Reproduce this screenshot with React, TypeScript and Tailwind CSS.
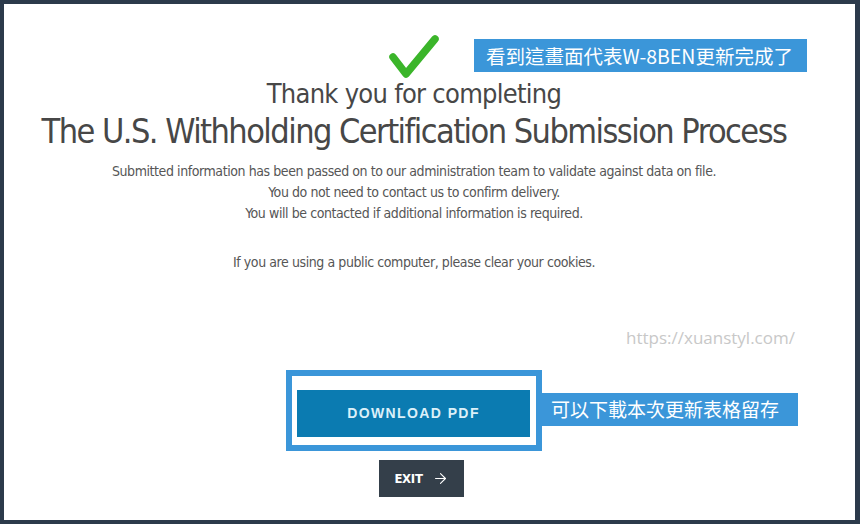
import React from "react";
import { ArrowRight } from "lucide-react";

const narrow = "font-['DejaVu_Sans_Condensed','Roboto',sans-serif]";

export default function App() {
  return (
    <div className="w-[860px] h-[524px] bg-[#2c3a4b] pt-[4px] pl-[4px] pr-[5px] pb-[4px]">
      <div className="relative w-full h-full bg-white flex flex-col items-center pr-[31px] overflow-hidden">
        <svg width="56" height="50" viewBox="0 0 56 50" className="mt-[24px] shrink-0">
          <path d="M7 29 L20 46 L49 11" fill="none" stroke="#3bb52a" strokeWidth="7.5" strokeLinecap="round" strokeLinejoin="round" />
        </svg>
        <div className={`${narrow} text-[27px] leading-[32px] tracking-[-0.72px] text-[#474747] whitespace-nowrap`}>Thank you for completing</div>
        <div className={`${narrow} text-[34px] leading-[40px] tracking-[-1.55px] mt-[1px] text-[#474747] whitespace-nowrap`}>
          The U.S. Withholding Certification Submission Process
        </div>
        <div className={`${narrow} text-[14px] leading-[21px] tracking-[-0.42px] mt-[10px] text-[#565656] text-center whitespace-nowrap`}>
          <p>Submitted information has been passed on to our administration team to validate against data on file.</p>
          <p>You do not need to contact us to confirm delivery.</p>
          <p>You will be contacted if additional information is required.</p>
          <p className="mt-[28px]">If you are using a public computer, please clear your cookies.</p>
        </div>

        <div className="relative mt-[97px] border-[6px] border-[#3b96d9] pt-[14px] pb-[8px] pl-[5px] pr-[6px]">
          <div className="w-[233px] h-[47px] bg-[#0b7bb1] flex items-center justify-center font-['Liberation_Sans',sans-serif] font-bold text-[14px] tracking-[1.4px] text-[#dcf0f9]">
            DOWNLOAD PDF
          </div>
          <div className="absolute left-[calc(100%+6px)] top-[17px] w-[256px] h-[33px] bg-[#3b96d9] flex items-center pl-[9px] font-['Noto_Sans_CJK_TC',sans-serif] text-[19px] text-white whitespace-nowrap">
            可以下載本次更新表格留存
          </div>
        </div>

        <div className="mt-[9px] ml-[15px] w-[85px] h-[37px] bg-[#343f4a] flex items-center justify-center gap-[9px] text-white">
          <span className={`${narrow} font-bold text-[13px] tracking-[-0.3px]`}>EXIT</span>
          <ArrowRight size={17} strokeWidth={1.5} />
        </div>

        <div className="absolute left-[470px] top-[35px] w-[333px] h-[33px] bg-[#3b96d9] flex items-center pl-[12px] font-['Noto_Sans_CJK_TC',sans-serif] text-[19.5px] text-white whitespace-nowrap">
          看到這畫面代表W-8BEN更新完成了
        </div>

        <div className="absolute left-[622px] top-[321px] font-['Open_Sans',sans-serif] text-[17px] text-[#c8c8c8]">
          https://xuanstyl.com/
        </div>
      </div>
    </div>
  );
}
